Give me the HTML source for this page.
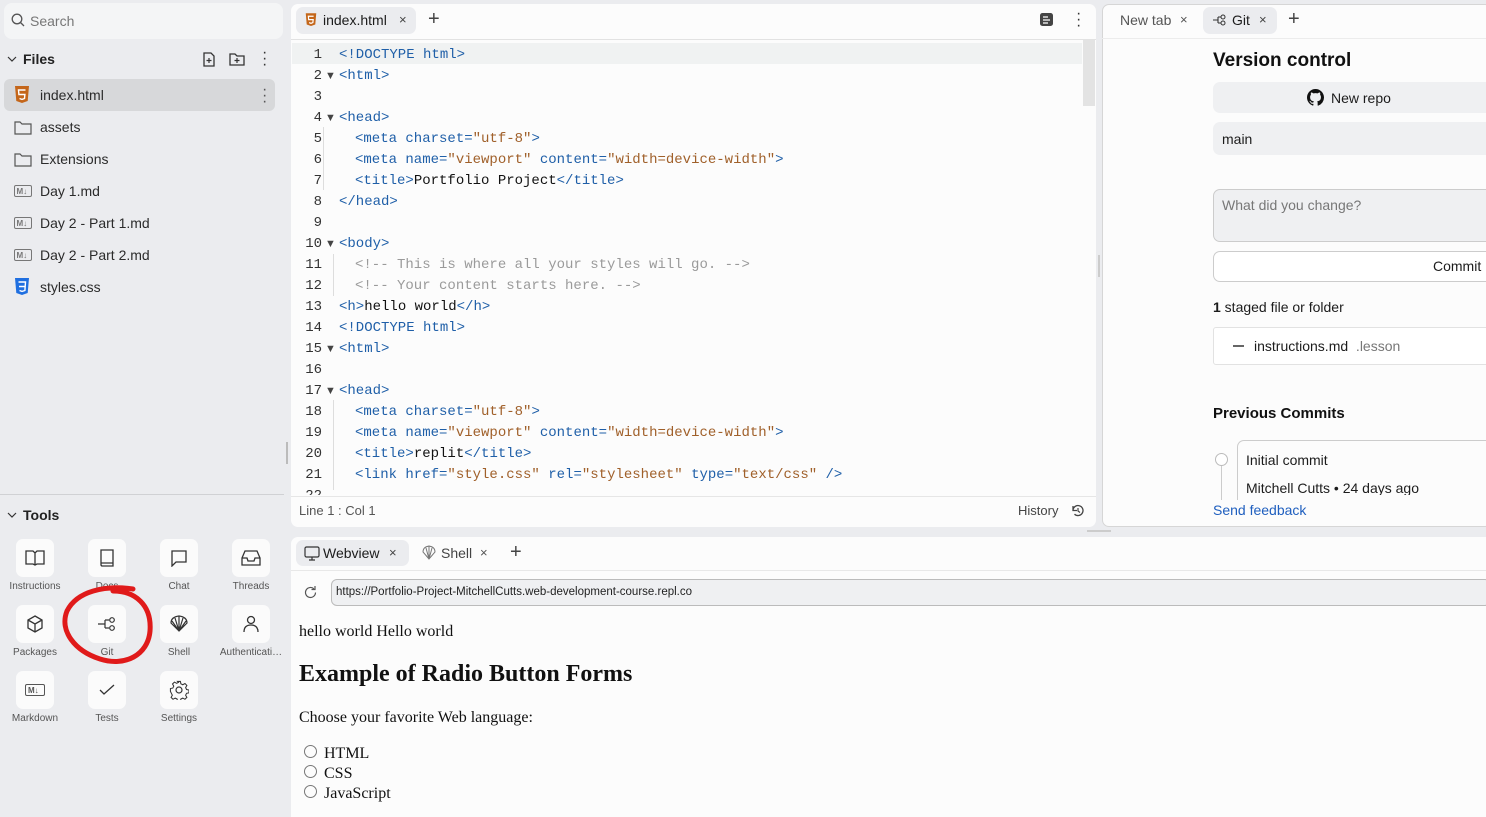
<!DOCTYPE html>
<html><head><meta charset="utf-8"><style>
*{box-sizing:border-box;margin:0;padding:0}
body{width:1486px;height:812px;overflow:hidden;background:#ebecef;font-family:"Liberation Sans",sans-serif;color:#1c1c1c;position:relative}
.a{position:absolute}
.side{font-size:14px;color:#2b2b2b}
.fi{position:absolute;left:4px;width:271px;height:30px;display:flex;align-items:center;padding-left:36px}
.fi svg{position:absolute;left:10px}
.tile{position:absolute;width:38px;height:38px;background:#fbfbfb;border-radius:7px;display:flex;align-items:center;justify-content:center}
.tl{position:absolute;width:72px;text-align:center;font-size:10px;color:#555;white-space:nowrap;overflow:hidden;text-overflow:ellipsis}
.ln{position:absolute;left:291px;width:31px;text-align:right;color:#333;font-family:"Liberation Mono",monospace;font-size:14px}
.cl{position:absolute;white-space:pre;font-family:"Liberation Mono",monospace;font-size:14px;color:#111}
.t{color:#1f5fa8}.s{color:#a0602a}.c{color:#9a9a9a}
.fold{position:absolute;left:325px;font-size:11px;color:#444}
#code{position:absolute;left:0;top:2px;width:1100px;height:494px}
</style></head><body>
<!-- sidebar -->
<div class="a" style="left:4px;top:3px;width:279px;height:36px;background:#f4f5f6;border-radius:8px"></div>
<svg class="a" style="left:11px;top:13px" width="14" height="14" viewBox="0 0 14 14"><circle cx="6" cy="6" r="4.8" fill="none" stroke="#555" stroke-width="1.3"/><path d="M9.5 9.5L13 13" stroke="#555" stroke-width="1.3"/></svg>
<div class="a side" style="left:30px;top:13px;color:#777">Search</div>
<svg class="a" style="left:7px;top:55px" width="10" height="8"><path d="M1 2l4 4 4-4" fill="none" stroke="#333" stroke-width="1.2"/></svg>
<div class="a side" style="left:23px;top:51px;font-size:14px;font-weight:bold;color:#222">Files</div>
<svg class="a" style="left:202px;top:52px" width="14" height="15"><path d="M2 1h7l3 3v10H2z" fill="none" stroke="#333" stroke-width="1.3"/><path d="M7 6v5M4.5 8.5h5" stroke="#333" stroke-width="1.2"/></svg>
<svg class="a" style="left:229px;top:52px" width="16" height="14"><path d="M1 2h5l2 2h7v9H1z" fill="none" stroke="#333" stroke-width="1.3"/><path d="M8 6v5M5.5 8.5h5" stroke="#333" stroke-width="1.2"/></svg>
<div class="a" style="left:262px;top:50px;font-size:16px;line-height:6px;color:#333">·<br>·<br>·</div>
<div class="a" style="left:4px;top:79px;width:271px;height:32px;background:#d7d8da;border-radius:6px"></div>
<div class="fi side" style="top:80px"><svg width="16" height="18" viewBox="0 0 16 18"><path d="M1 0h14l-1.3 15L8 17l-5.7-2z" fill="#c4661a"/><path d="M11.5 4H4.5l.4 4.5h6l-.4 4L8 13.4l-2.5-.9" fill="none" stroke="#fff" stroke-width="1.4"/></svg>index.html</div>
<div class="a" style="left:262px;top:87px;font-size:16px;line-height:6px;color:#555">·<br>·<br>·</div>
<div class="fi side" style="top:112px"><svg width="18" height="15"><path d="M1 2h5l2 2h9v10H1z" fill="none" stroke="#555" stroke-width="1.2"/></svg>assets</div>
<div class="fi side" style="top:144px"><svg width="18" height="15"><path d="M1 2h5l2 2h9v10H1z" fill="none" stroke="#555" stroke-width="1.2"/></svg>Extensions</div>
<div class="fi side" style="top:176px"><svg width="18" height="12"><rect x=".5" y=".5" width="17" height="11" rx="1.5" fill="none" stroke="#777"/><text x="2.5" y="9" font-size="8" font-weight="bold" fill="#777" font-family="Liberation Sans">M↓</text></svg>Day 1.md</div>
<div class="fi side" style="top:208px"><svg width="18" height="12"><rect x=".5" y=".5" width="17" height="11" rx="1.5" fill="none" stroke="#777"/><text x="2.5" y="9" font-size="8" font-weight="bold" fill="#777" font-family="Liberation Sans">M↓</text></svg>Day 2 - Part 1.md</div>
<div class="fi side" style="top:240px"><svg width="18" height="12"><rect x=".5" y=".5" width="17" height="11" rx="1.5" fill="none" stroke="#777"/><text x="2.5" y="9" font-size="8" font-weight="bold" fill="#777" font-family="Liberation Sans">M↓</text></svg>Day 2 - Part 2.md</div>
<div class="fi side" style="top:272px"><svg width="16" height="18" viewBox="0 0 16 18"><path d="M1 0h14l-1.3 15L8 17l-5.7-2z" fill="#1f6fe0"/><path d="M4.5 4h7l-.6 8.5L8 13.4l-2.5-.9M5 8.5h6" fill="none" stroke="#fff" stroke-width="1.4"/></svg>styles.css</div>
<div class="a" style="left:0;top:494px;width:284px;height:1px;background:#d0d1d4"></div>
<div class="a" style="left:286px;top:442px;width:2px;height:22px;background:#bbb"></div>
<svg class="a" style="left:7px;top:511px" width="10" height="8"><path d="M1 2l4 4 4-4" fill="none" stroke="#333" stroke-width="1.2"/></svg>
<div class="a side" style="left:23px;top:507px;font-weight:bold;color:#222">Tools</div>
<!-- tiles -->
<div class="tile" style="left:16px;top:539px"><svg width="20" height="18"><path d="M1 2h7l2 2 2-2h7v13h-7l-2 1-2-1H1zM10 4v12" fill="none" stroke="#333" stroke-width="1.3"/></svg></div>
<div class="tl" style="left:-1px;top:581px">Instructions</div>
<div class="tile" style="left:88px;top:539px"><svg width="16" height="18"><path d="M2 1h12v16H3a1.5 1.5 0 0 1-1-1.5zM2 14h12" fill="none" stroke="#333" stroke-width="1.3"/></svg></div>
<div class="tl" style="left:71px;top:581px">Docs</div>
<div class="tile" style="left:160px;top:539px"><svg width="18" height="17"><path d="M2 1h14v11H6l-4 4z" fill="none" stroke="#333" stroke-width="1.3"/></svg></div>
<div class="tl" style="left:143px;top:581px">Chat</div>
<div class="tile" style="left:232px;top:539px"><svg width="20" height="16"><path d="M4 1h12l3 7v7H1V8zM1 8h5l1 3h6l1-3h5" fill="none" stroke="#333" stroke-width="1.3"/></svg></div>
<div class="tl" style="left:215px;top:581px">Threads</div>
<div class="tile" style="left:16px;top:605px"><svg width="18" height="18"><path d="M9 1l7 4v8l-7 4-7-4V5zM2 5l7 4 7-4M9 9v8" fill="none" stroke="#333" stroke-width="1.3"/></svg></div>
<div class="tl" style="left:-1px;top:647px">Packages</div>
<div class="tile" style="left:88px;top:605px"><svg width="20" height="18"><path d="M1 9h7M8 5v8M8 5h4M8 13h4" fill="none" stroke="#333" stroke-width="1.2"/><circle cx="15" cy="5" r="2.3" fill="none" stroke="#333" stroke-width="1.2"/><circle cx="15" cy="13" r="2.3" fill="none" stroke="#333" stroke-width="1.2"/></svg></div>
<div class="tl" style="left:71px;top:647px">Git</div>
<div class="tile" style="left:160px;top:605px"><svg width="20" height="18"><path d="M10 16L2 8q0-6 8-7q8 1 8 7zM10 16L6 3M10 16L10 1M10 16l4-13M10 16L3 6M10 16l7-10" fill="none" stroke="#333" stroke-width="1.2"/></svg></div>
<div class="tl" style="left:143px;top:647px">Shell</div>
<div class="tile" style="left:232px;top:605px"><svg width="18" height="18"><circle cx="9" cy="5" r="3.5" fill="none" stroke="#333" stroke-width="1.3"/><path d="M2 17q0-7 7-7t7 7" fill="none" stroke="#333" stroke-width="1.3"/></svg></div>
<div class="tl" style="left:215px;top:647px">Authenticati…</div>
<div class="tile" style="left:16px;top:671px"><svg width="20" height="12"><rect x=".5" y=".5" width="19" height="11" rx="1.5" fill="none" stroke="#555"/><text x="3" y="9" font-size="8" font-weight="bold" fill="#555" font-family="Liberation Sans">M↓</text></svg></div>
<div class="tl" style="left:-1px;top:713px">Markdown</div>
<div class="tile" style="left:88px;top:671px"><svg width="16" height="12"><path d="M1 6l4 4 10-9" fill="none" stroke="#333" stroke-width="1.3"/></svg></div>
<div class="tl" style="left:71px;top:713px">Tests</div>
<div class="tile" style="left:160px;top:671px"><svg width="20" height="20" viewBox="0 0 20 20"><path d="M8.5 1h3l.5 2.5 2 1 2.3-1.3 2 2-1.3 2.3 1 2 2.5.5v3l-2.5.5-1 2 1.3 2.3-2 2-2.3-1.3-2 1-.5 2.5h-3l-.5-2.5-2-1-2.3 1.3-2-2 1.3-2.3-1-2L1 11.5v-3l2.5-.5 1-2-1.3-2.3 2-2 2.3 1.3 2-1z" fill="none" stroke="#333" stroke-width="1.1" transform="scale(.95) translate(.5 .5)"/><circle cx="10" cy="10" r="3" fill="none" stroke="#333" stroke-width="1.2"/></svg></div>
<div class="tl" style="left:143px;top:713px">Settings</div>
<svg class="a" style="left:55px;top:583px" width="105" height="90"><path d="M78 6 C50 2 22 8 12 28 C4 48 20 68 45 76 C70 84 93 72 95 48 C97 22 80 8 58 8" fill="none" stroke="#e01a1a" stroke-width="5" stroke-linecap="round"/></svg>

<!-- editor panel -->
<div class="a" style="left:291px;top:4px;width:805px;height:523px;background:#fcfcfc;border-radius:7px"></div>
<div class="a" style="left:296px;top:7px;width:120px;height:27px;background:#ebecef;border-radius:7px"></div>
<svg class="a" style="left:305px;top:13px" width="12" height="14" viewBox="0 0 16 18"><path d="M1 0h14l-1.3 15L8 17l-5.7-2z" fill="#c4661a"/><path d="M11.5 4H4.5l.4 4.5h6l-.4 4L8 13.4l-2.5-.9" fill="none" stroke="#fff" stroke-width="1.6"/></svg>
<div class="a" style="left:323px;top:12px;font-size:14px">index.html</div>
<div class="a" style="left:399px;top:12px;font-size:13px;color:#444">×</div>
<div class="a" style="left:428px;top:8px;font-size:20px;color:#444">+</div>
<svg class="a" style="left:1039px;top:12px" width="15" height="15"><rect x="1" y="1" width="13" height="13" rx="2.5" fill="#444"/><path d="M4 5h5M4 8h7M4 11h5" stroke="#fff" stroke-width="1.3"/></svg>
<div class="a" style="left:1076px;top:11px;font-size:16px;line-height:6px;color:#333">·<br>·<br>·</div>
<div class="a" style="left:291px;top:39px;width:805px;height:1px;background:#e2e2e2"></div>
<div class="a" style="left:292px;top:43px;width:790px;height:21px;background:#f0f2f2"></div>
<div class="a" style="left:1083px;top:40px;width:12px;height:66px;background:#e3e3e3"></div>
<div class="a" style="left:323px;top:127px;width:1px;height:63px;background:#ddd"></div>
<div class="a" style="left:333px;top:254px;width:1px;height:42px;background:#ddd"></div>
<div class="a" style="left:333px;top:400px;width:1px;height:90px;background:#ddd"></div>
<div class="a" style="left:291px;top:496px;width:805px;height:1px;background:#e6e6e6"></div>
<div class="a" style="left:299px;top:503px;font-size:13px;color:#555">Line 1 : Col 1</div>
<div class="a" style="left:1018px;top:503px;font-size:13px;color:#444">History</div>
<svg class="a" style="left:1070px;top:503px" width="15" height="15"><path d="M3 7.5a5 5 0 1 1 1.5 3.6M3 3v4.5h4" fill="none" stroke="#444" stroke-width="1.3"/><path d="M8 5v3l2 1.5" fill="none" stroke="#444" stroke-width="1.2"/></svg>
<div class="a" style="left:1098px;top:255px;width:2px;height:22px;background:#ccc"></div>

<!-- git panel -->
<div class="a" style="left:1102px;top:4px;width:390px;height:523px;background:#fcfcfc;border:1px solid #d6d6d6;border-radius:7px"></div>
<div class="a" style="left:1120px;top:12px;font-size:14px;color:#555">New tab</div>
<div class="a" style="left:1180px;top:12px;font-size:13px;color:#555">×</div>
<div class="a" style="left:1203px;top:7px;width:74px;height:27px;background:#ebecef;border-radius:7px"></div>
<svg class="a" style="left:1212px;top:13px" width="16" height="14"><path d="M1 7h5M6 4v6M6 4h3M6 10h3" fill="none" stroke="#333" stroke-width="1.1"/><circle cx="11" cy="4" r="2" fill="none" stroke="#333"/><circle cx="11" cy="10" r="2" fill="none" stroke="#333"/></svg>
<div class="a" style="left:1232px;top:12px;font-size:14px">Git</div>
<div class="a" style="left:1259px;top:12px;font-size:13px;color:#444">×</div>
<div class="a" style="left:1288px;top:8px;font-size:20px;color:#444">+</div>
<div class="a" style="left:1102px;top:38px;width:384px;height:1px;background:#ececec"></div>
<div class="a" style="left:1213px;top:50px;font-size:19px;font-weight:bold;color:#111">Version control</div>
<div class="a" style="left:1213px;top:82px;width:280px;height:31px;background:#eff0f2;border-radius:7px"></div>
<svg class="a" style="left:1307px;top:89px" width="17" height="17" viewBox="0 0 16 16"><path fill="#111" d="M8 0C3.58 0 0 3.58 0 8c0 3.540 2.29 6.53 5.47 7.59.4.07.55-.17.55-.38v-1.34c-2.23.48-2.7-1.070-2.7-1.070-.36-.92-.89-1.17-.89-1.17-.73-.5.06-.49.06-.49.8.06 1.23.83 1.23.83.72 1.22 1.87.87 2.33.66.07-.52.28-.87.51-1.070-1.78-.2-3.64-.89-3.64-3.95 0-.87.31-1.59.82-2.15-.08-.2-.36-1.02.08-2.12 0 0 .67-.21 2.2.82a7.6 7.6 0 0 1 4 0c1.53-1.04 2.2-.82 2.2-.82.44 1.1.16 1.92.08 2.12.51.56.82 1.27.82 2.15 0 3.07-1.87 3.75-3.65 3.95.29.25.54.73.54 1.48v2.2c0 .21.15.46.55.38A8 8 0 0 0 16 8c0-4.42-3.58-8-8-8z"/></svg>
<div class="a" style="left:1331px;top:90px;font-size:14px">New repo</div>
<div class="a" style="left:1213px;top:122px;width:280px;height:33px;background:#eff0f2;border-radius:7px"></div>
<div class="a" style="left:1222px;top:131px;font-size:14px">main</div>
<div class="a" style="left:1213px;top:189px;width:280px;height:53px;background:#eff0f2;border:1px solid #ccc;border-radius:7px"></div>
<div class="a" style="left:1222px;top:197px;font-size:14px;color:#777">What did you change?</div>
<div class="a" style="left:1213px;top:251px;width:280px;height:31px;background:#fff;border:1px solid #ccc;border-radius:7px"></div>
<div class="a" style="left:1433px;top:258px;font-size:14px">Commit</div>
<div class="a" style="left:1213px;top:299px;font-size:14px"><b>1</b> staged file or folder</div>
<div class="a" style="left:1213px;top:327px;width:280px;height:38px;background:#fff;border:1px solid #e2e2e2;border-radius:3px"></div>
<div class="a" style="left:1233px;top:345px;width:11px;height:2px;background:#666"></div>
<div class="a" style="left:1254px;top:338px;font-size:14px">instructions.md <span style="color:#777">&nbsp;.lesson</span></div>
<div class="a" style="left:1213px;top:405px;font-size:15px;font-weight:bold;color:#111">Previous Commits</div>
<div class="a" style="left:1237px;top:440px;width:260px;height:60px;border:1px solid #ccc;border-bottom:none;border-radius:7px 0 0 0"></div>
<div class="a" style="left:1215px;top:453px;width:13px;height:13px;border:1px solid #bbb;border-radius:50%;background:#fff"></div>
<div class="a" style="left:1221px;top:466px;width:1px;height:34px;background:#ccc"></div>
<div class="a" style="left:1246px;top:452px;font-size:14px">Initial commit</div>
<div class="a" style="left:1246px;top:480px;font-size:14px;height:15px;overflow:hidden">Mitchell Cutts • 24 days ago</div>
<div class="a" style="left:1213px;top:502px;font-size:14px;color:#1f5fbf">Send feedback</div>
<div class="a" style="left:1087px;top:530px;width:24px;height:2px;background:#ccc"></div>

<!-- bottom panel -->
<div class="a" style="left:291px;top:537px;width:1200px;height:280px;background:#fcfcfc;border-radius:7px 0 0 0"></div>
<div class="a" style="left:296px;top:540px;width:113px;height:26px;background:#ebecef;border-radius:7px"></div>
<svg class="a" style="left:304px;top:546px" width="16" height="15"><rect x="1" y="1" width="14" height="10" rx="1.5" fill="none" stroke="#333" stroke-width="1.2"/><path d="M8 11v3M5 14h6" stroke="#333" stroke-width="1.2"/></svg>
<div class="a" style="left:323px;top:545px;font-size:14px">Webview</div>
<div class="a" style="left:389px;top:545px;font-size:13px;color:#444">×</div>
<svg class="a" style="left:421px;top:545px" width="16" height="15"><path d="M8 14L2 7q0-5 6-6q6 1 6 6zM8 14L5 3M8 14V1M8 14l3-11" fill="none" stroke="#777" stroke-width="1"/></svg>
<div class="a" style="left:441px;top:545px;font-size:14px;color:#444">Shell</div>
<div class="a" style="left:480px;top:545px;font-size:13px;color:#555">×</div>
<div class="a" style="left:510px;top:541px;font-size:20px;color:#444">+</div>
<div class="a" style="left:291px;top:570px;width:1200px;height:1px;background:#e8e8e8"></div>
<svg class="a" style="left:303px;top:585px" width="15" height="15"><path d="M12.5 7.5a5 5 0 1 1-1.6-3.7M12 1v3.5H8.5" fill="none" stroke="#555" stroke-width="1.2"/></svg>
<div class="a" style="left:331px;top:579px;width:1160px;height:27px;background:#eff0f2;border:1px solid #bbb;border-radius:6px"></div>
<div class="a" style="left:336px;top:586px;font-size:11.5px;color:#222">https://Portfolio-Project-MitchellCutts.web-development-course.repl.co</div>
<div class="a" style="left:299px;top:623px;font-family:'Liberation Serif',serif;font-size:16px;color:#111">hello world Hello world</div>
<div class="a" style="left:299px;top:661px;font-family:'Liberation Serif',serif;font-size:24px;font-weight:bold;color:#111">Example of Radio Button Forms</div>
<div class="a" style="left:299px;top:709px;font-family:'Liberation Serif',serif;font-size:16px;color:#111">Choose your favorite Web language:</div>
<div class="a" style="left:304px;top:745px;width:13px;height:13px;border:1px solid #777;border-radius:50%"></div>
<div class="a" style="left:304px;top:765px;width:13px;height:13px;border:1px solid #777;border-radius:50%"></div>
<div class="a" style="left:304px;top:785px;width:13px;height:13px;border:1px solid #777;border-radius:50%"></div>
<div class="a" style="left:324px;top:744px;font-family:'Liberation Serif',serif;font-size:16px;line-height:20px;color:#111">HTML<br>CSS<br>JavaScript</div>

<!-- code lines -->
<div id="code">
<div class="ln" style="top:45px">1</div><div class="cl t" style="left:339px;top:45px">&lt;!DOCTYPE html&gt;</div>
<div class="ln" style="top:66px">2</div><div class="fold" style="top:68px">▼</div><div class="cl t" style="left:339px;top:66px">&lt;html&gt;</div>
<div class="ln" style="top:87px">3</div>
<div class="ln" style="top:108px">4</div><div class="fold" style="top:110px">▼</div><div class="cl t" style="left:339px;top:108px">&lt;head&gt;</div>
<div class="ln" style="top:129px">5</div><div class="cl" style="left:355px;top:129px"><span class="t">&lt;meta charset=</span><span class="s">"utf-8"</span><span class="t">&gt;</span></div>
<div class="ln" style="top:150px">6</div><div class="cl" style="left:355px;top:150px"><span class="t">&lt;meta name=</span><span class="s">"viewport"</span><span class="t"> content=</span><span class="s">"width=device-width"</span><span class="t">&gt;</span></div>
<div class="ln" style="top:171px">7</div><div class="cl" style="left:355px;top:171px"><span class="t">&lt;title&gt;</span>Portfolio Project<span class="t">&lt;/title&gt;</span></div>
<div class="ln" style="top:192px">8</div><div class="cl t" style="left:339px;top:192px">&lt;/head&gt;</div>
<div class="ln" style="top:213px">9</div>
<div class="ln" style="top:234px">10</div><div class="fold" style="top:236px">▼</div><div class="cl t" style="left:339px;top:234px">&lt;body&gt;</div>
<div class="ln" style="top:255px">11</div><div class="cl c" style="left:355px;top:255px">&lt;!-- This is where all your styles will go. --&gt;</div>
<div class="ln" style="top:276px">12</div><div class="cl c" style="left:355px;top:276px">&lt;!-- Your content starts here. --&gt;</div>
<div class="ln" style="top:297px">13</div><div class="cl" style="left:339px;top:297px"><span class="t">&lt;h&gt;</span>hello world<span class="t">&lt;/h&gt;</span></div>
<div class="ln" style="top:318px">14</div><div class="cl t" style="left:339px;top:318px">&lt;!DOCTYPE html&gt;</div>
<div class="ln" style="top:339px">15</div><div class="fold" style="top:341px">▼</div><div class="cl t" style="left:339px;top:339px">&lt;html&gt;</div>
<div class="ln" style="top:360px">16</div>
<div class="ln" style="top:381px">17</div><div class="fold" style="top:383px">▼</div><div class="cl t" style="left:339px;top:381px">&lt;head&gt;</div>
<div class="ln" style="top:402px">18</div><div class="cl" style="left:355px;top:402px"><span class="t">&lt;meta charset=</span><span class="s">"utf-8"</span><span class="t">&gt;</span></div>
<div class="ln" style="top:423px">19</div><div class="cl" style="left:355px;top:423px"><span class="t">&lt;meta name=</span><span class="s">"viewport"</span><span class="t"> content=</span><span class="s">"width=device-width"</span><span class="t">&gt;</span></div>
<div class="ln" style="top:444px">20</div><div class="cl" style="left:355px;top:444px"><span class="t">&lt;title&gt;</span>replit<span class="t">&lt;/title&gt;</span></div>
<div class="ln" style="top:465px">21</div><div class="cl" style="left:355px;top:465px"><span class="t">&lt;link href=</span><span class="s">"style.css"</span><span class="t"> rel=</span><span class="s">"stylesheet"</span><span class="t"> type=</span><span class="s">"text/css"</span><span class="t"> /&gt;</span></div>
<div class="ln" style="top:486px;height:7px;overflow:hidden">22</div>
</div>
</body></html>
